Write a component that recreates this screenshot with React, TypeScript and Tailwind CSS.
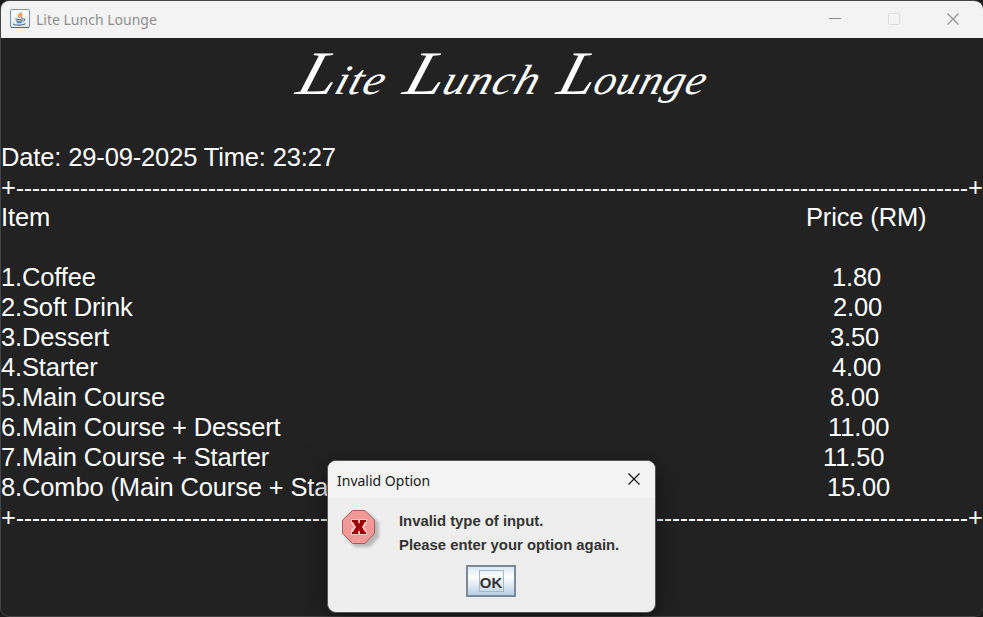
const menu = [
  { name: '1.Coffee', price: '1.80', left: 'ml-[831px]' },
  { name: '2.Soft Drink', price: '2.00', left: 'ml-[832px]' },
  { name: '3.Dessert', price: '3.50', left: 'ml-[829px]' },
  { name: '4.Starter', price: '4.00', left: 'ml-[831px]' },
  { name: '5.Main Course', price: '8.00', left: 'ml-[829px]' },
  { name: '6.Main Course + Dessert', price: '11.00', left: 'ml-[827px]' },
  { name: '7.Main Course + Starter', price: '11.50', left: 'ml-[822px]' },
  { name: '8.Combo (Main Course + Starter + Dessert)', price: '15.00', left: 'ml-[826px]' },
];

function Row({ name, price, left }: { name: string; price: string; left: string }) {
  return (
    <div className="grid h-[30px] whitespace-pre">
      <span className="col-start-1 row-start-1">{name}</span>
      <span className={`col-start-1 row-start-1 ${left}`}>{price}</span>
    </div>
  );
}

function Rule() {
  return (
    <div className="flex h-[30px] whitespace-pre">
      <span className="w-[15px]">+</span>
      <span className="w-[952px] pt-px text-[24px] leading-[30px] tracking-[0.008px]">{'-'.repeat(119)}</span>
      <span>+</span>
    </div>
  );
}

function Word({ rest, width, stretch }: { rest: string; width: string; stretch: string }) {
  return (
    <span className={`flex items-baseline ${width}`}>
      <span className={`flex origin-bottom-left -skew-x-[16deg] items-baseline ${stretch}`}>
        <span className="text-[62px] leading-none">L</span>
        <span className="text-[42px] leading-none tracking-[0.8px]">{rest}</span>
      </span>
    </span>
  );
}

function JavaIcon() {
  return (
    <svg width="20" height="20" viewBox="0 0 20 20" fill="none">
      <defs>
        <linearGradient id="tile" x1="0" y1="0" x2="0" y2="1">
          <stop stopColor="#fff" />
          <stop offset="1" stopColor="#e2e6ea" />
        </linearGradient>
      </defs>
      <rect x=".5" y=".5" width="19" height="18" rx="1.5" fill="url(#tile)" stroke="#7892aa" />
      <path d="M1 18.5h18" stroke="#496a87" />
      <path d="M10.8 3c1.4 2-2.8 2.5-2.4 4.2.2.8 1 1.1 1 1.800M12.5 5.300c-1.800.7-2 1.400-1.200 2.300.5.7 0 1.100-.4 1.600" stroke="#e9873d" strokeWidth="1.3" />
      <path d="M5.5 9.800c2 .8 5.500.8 7.500 0M6 11.500c2 .9 4.800.9 6.500 0M6.700 13.200c1.600.6 3.700.6 5 0M13 9.800c2.500-.4 2.200 2-.2 2.500M4 14.800c-2.200 1.600 9.500 1.800 11.200-.1" stroke="#557b9e" strokeWidth="1.15" />
    </svg>
  );
}

function ErrorIcon() {
  return (
    <svg width="40" height="40" viewBox="0 0 40 40">
      <defs>
        <filter id="soft" x="-20%" y="-20%" width="150%" height="150%">
          <feGaussianBlur stdDeviation="1.5" />
        </filter>
      </defs>
      <path d="M13 4h15l9 9v14l-9 10H13l-9-9V13Z" fill="#aaa" opacity=".8" filter="url(#soft)" />
      <path d="M10.500.5h12.500l9.500 9.500v13.500l-9.500 10H10.500l-10-10V10Z" fill="#f19999" stroke="#a65c5c" />
      <path d="M9 9h7v3h1V9h8v5l-3 3 3 4v4h-8v-2h-1v2H9v-5l3-3-3-4Z" fill="#ffc5c5" />
      <path d="M10 10h6v2l1 2 1-2v-2h6v2h-1l-3 5 3 5h1v2h-6v-2l-1-2-1 2v2h-6v-2h1l3-5-3-5h-1Z" fill="#990000" />
    </svg>
  );
}

export default function App() {
  return (
    <div className="relative h-[617px] w-[983px] overflow-hidden bg-[#1b1b1b] font-['Liberation_Sans',Arial,sans-serif]">
      <main className="flex h-[617px] w-[983px] flex-col overflow-hidden rounded-[9px] border border-r-0 border-[#444] bg-[#222] text-white">
        <header className="flex h-[37px] shrink-0 items-center bg-[#f3f3f3] pr-[24px] pb-[2px] pl-[9px] font-['Noto_Sans',sans-serif] text-[14px] text-[#8f8f8f]">
          <div className="pt-px"><JavaIcon /></div>
          <h1 className="ml-[6px] pt-[2px] leading-5 whitespace-nowrap">Lite Lunch Lounge</h1>
          <div className="ml-auto flex items-center gap-[46px]">
            <svg width="13" height="12"><path d="M0 5.500h12" stroke="#8f8f8f" /></svg>
            <svg width="13" height="12"><rect x=".5" y=".5" width="11" height="11" rx="1" fill="none" stroke="#dedede" /></svg>
            <svg width="12" height="12"><path d="m.5.5 11 11m0-11-11 11" stroke="#8f8f8f" strokeWidth="1.1" /></svg>
          </div>
        </header>
        <h2 className="flex h-[104px] shrink-0 pt-[4px] pl-[290px] font-['Liberation_Serif',serif] italic">
          <Word rest="ite" width="w-[107px]" stretch="scale-x-[1.11]" />
          <Word rest="unch" width="w-[154px]" stretch="scale-x-[1.13]" />
          <Word rest="ounge" width="w-[170px]" stretch="scale-x-[1.05]" />
        </h2>
        <section className="text-[25.500px] leading-[30px] tracking-[-0.140px]">
          <div className="h-[30px] whitespace-pre">Date: 29-09-2025 Time: 23:27</div>
          <Rule />
          <Row name="Item" price="Price (RM)" left="ml-[805px]" />
          <div className="h-[30px]" />
          {menu.map((item) => (
            <Row key={item.name} {...item} />
          ))}
          <Rule />
        </section>
      </main>

      <div role="dialog" className="absolute top-[460px] left-[327px] flex h-[153px] w-[329px] flex-col overflow-hidden rounded-[9px] border border-[#555] bg-[#eee] text-[#333] shadow-[0_8px_28px_rgba(0,0,0,0.5)]">
        <div className="flex h-[37px] shrink-0 items-center justify-between bg-[#f3f3f3] pr-[15px] pb-px pl-[9px] font-['Noto_Sans',sans-serif] text-[14px] text-[#191919]">
          <span className="pt-[2px]">Invalid Option</span>
          <svg width="12" height="12"><path d="m.5.5 11 11m0-11-11 11" stroke="#111" strokeWidth="1.2" /></svg>
        </div>
        <div className="flex pt-[11px] pl-[14px]">
          <div className="pt-px"><ErrorIcon /></div>
          <div className="ml-[17px] text-[14.850px] leading-6 font-bold whitespace-nowrap">
            <p>Invalid type of input.</p>
            <p>Please enter your option again.</p>
          </div>
        </div>
        <button className="mt-[8px] ml-[138px] flex h-8 w-[50px] items-center justify-center border-2 border-[#7a8a99] bg-linear-to-b from-[#dce8f3] via-white via-35% to-[#b8cfe5] text-[15px] font-bold">
          <span className="flex h-[22px] w-[25px] items-center justify-center border border-[#a3b8cc] pt-1">OK</span>
        </button>
      </div>
    </div>
  );
}
